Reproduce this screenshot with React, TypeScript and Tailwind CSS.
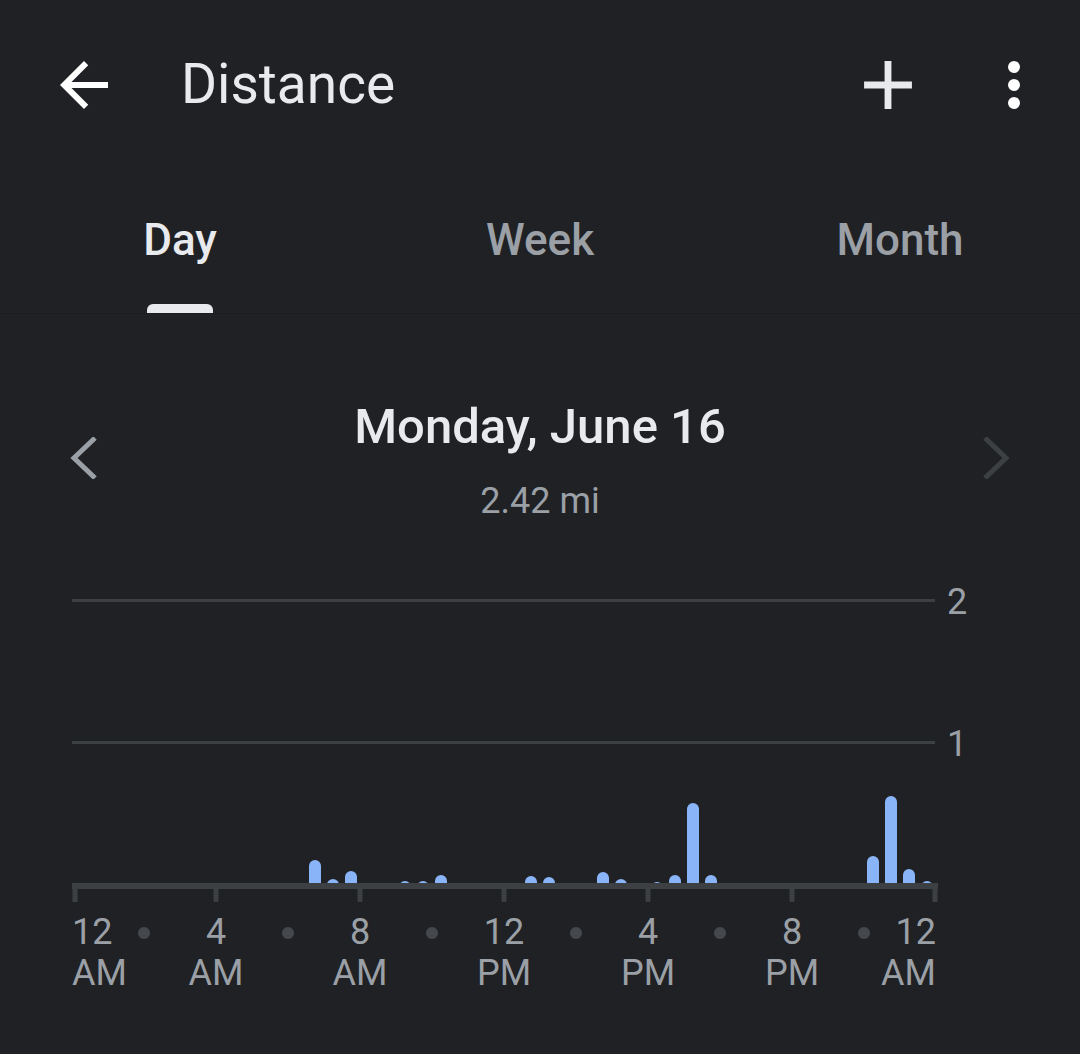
import React from "react";

const bars: [number, number][] = [
  [315, 860], [333, 879], [351, 871], [405, 881], [423, 881], [441, 875],
  [531, 876], [549, 877], [603, 872], [621, 879], [657, 882], [675, 875],
  [693, 803], [711, 875], [819, 883], [873, 856], [891, 796], [909, 869], [927, 881],
];

const ticks = [75, 216, 360, 504, 648, 792, 935];

const labels: { t: string; b: string }[] = [
  { t: "12", b: "AM" },
  { t: "4", b: "AM" },
  { t: "8", b: "AM" },
  { t: "12", b: "PM" },
  { t: "4", b: "PM" },
  { t: "8", b: "PM" },
  { t: "12", b: "AM" },
];

function Chart() {
  const top = 560;
  return (
    <svg width={1080} height={345} className="block">
      <defs>
        <clipPath id="barclip">
          <rect x={0} y={0} width={1080} height={883 - top} />
        </clipPath>
      </defs>
      <rect x={72} y={599 - top} width={863} height={3} fill="#3c4043" />
      <rect x={72} y={741 - top} width={863} height={3} fill="#3c4043" />
      <text x={947} y={614 - top} fill="#9aa0a6" fontSize={36} fontFamily="Roboto, sans-serif">2</text>
      <text x={947} y={756 - top} fill="#9aa0a6" fontSize={36} fontFamily="Roboto, sans-serif">1</text>
      <g clipPath="url(#barclip)">
        {bars.map(([cx, t], i) => (
          <rect key={i} x={cx - 6} y={t - top} width={12} height={Math.max(890 - t, 14)} rx={6} fill="#8ab4f8" />
        ))}
      </g>
      <rect x={72} y={883 - top} width={866} height={6} fill="#3c4043" />
      {ticks.map((x, i) => (
        <rect key={i} x={x - 2.5} y={883 - top} width={5} height={19} fill="#3c4043" />
      ))}
    </svg>
  );
}

function AxisLabels() {
  const items: React.ReactNode[] = [];
  labels.forEach((l, i) => {
    const align =
      i === 0 ? "justify-start text-left" : i === labels.length - 1 ? "justify-end text-right" : "justify-center text-center";
    items.push(
      <div key={"l" + i} className={`flex w-0 ${align}`}>
        <div className="whitespace-nowrap">
          <div>{l.t}</div>
          <div>{l.b}</div>
        </div>
      </div>
    );
    if (i < labels.length - 1) {
      items.push(
        <div key={"d" + i} className="flex w-0 justify-center">
          <div className="mt-[15px] h-[12px] w-[12px] shrink-0 rounded-full bg-[#45484c]" />
        </div>
      );
    }
  });
  return (
    <div className="mt-[7px] ml-[72px] flex w-[864px] justify-between text-[36px] leading-[41px] text-[#9aa0a6]">
      {items}
    </div>
  );
}

export default function App() {
  return (
    <div
      className="min-h-[1054px] w-[1080px] bg-[#202124] text-[#e8eaed]"
      style={{ fontFamily: "Roboto, 'Noto Sans', sans-serif" }}
    >
      {/* Header */}
      <div className="flex h-[168px] items-center">
        <svg width={72} height={72} viewBox="0 0 24 24" className="ml-[48px] mt-[2px]">
          <path d="M20 11H7.83l5.59-5.59L12 4l-8 8 8 8 1.41-1.41L7.83 13H20v-2z" fill="#ffffff" />
        </svg>
        <div className="ml-[61px] text-[55px] leading-none text-[#e8eaed]">Distance</div>
        <div className="flex-1" />
        <svg width={82} height={82} viewBox="0 0 24 24" className="mt-[2px]">
          <path d="M19 13h-6v6h-2v-6H5v-2h6V5h2v6h6v2z" fill="#e8eaed" />
        </svg>
        <svg width={40} height={60} viewBox="0 0 40 60" className="ml-[65px] mr-[46px] mt-[2px]">
          <circle cx={20} cy={12} r={6} fill="#ffffff" />
          <circle cx={20} cy={30} r={6} fill="#ffffff" />
          <circle cx={20} cy={48} r={6} fill="#ffffff" />
        </svg>
      </div>

      {/* Tabs */}
      <div className="grid h-[146px] grid-cols-3 border-b border-[#1b1c1f]">
        <div className="flex flex-col items-center">
          <div className="mt-[50px] text-[44px] font-medium leading-none text-[#e8eaed]">Day</div>
          <div className="mt-auto h-[9px] w-[66px] rounded-t-[6px] bg-[#e8eaed]" />
        </div>
        <div className="flex flex-col items-center">
          <div className="mt-[50px] text-[44px] font-medium leading-none text-[#9aa0a6]">Week</div>
        </div>
        <div className="flex flex-col items-center">
          <div className="mt-[50px] text-[44px] font-medium leading-none text-[#9aa0a6]">Month</div>
        </div>
      </div>

      {/* Date */}
      <div className="flex items-center px-[70px] pt-[88px]">
        <svg width={28} height={42} viewBox="0 0 28 42" className="mb-[5px]">
          <polyline points="25,1 4,21 25,41" fill="none" stroke="#9aa0a6" strokeWidth={5} />
        </svg>
        <div className="flex flex-1 flex-col items-center">
          <div className="text-[49px] font-medium leading-none text-[#e8eaed]">Monday, June 16</div>
          <div className="mt-[32px] text-[36px] leading-none text-[#9aa0a6]">2.42 mi</div>
        </div>
        <svg width={28} height={42} viewBox="0 0 28 42" className="mb-[5px]">
          <polyline points="3,1 24,21 3,41" fill="none" stroke="#3c4043" strokeWidth={5} />
        </svg>
      </div>

      {/* Chart */}
      <div className="mt-[41px]">
        <Chart />
      </div>
      <AxisLabels />
    </div>
  );
}
